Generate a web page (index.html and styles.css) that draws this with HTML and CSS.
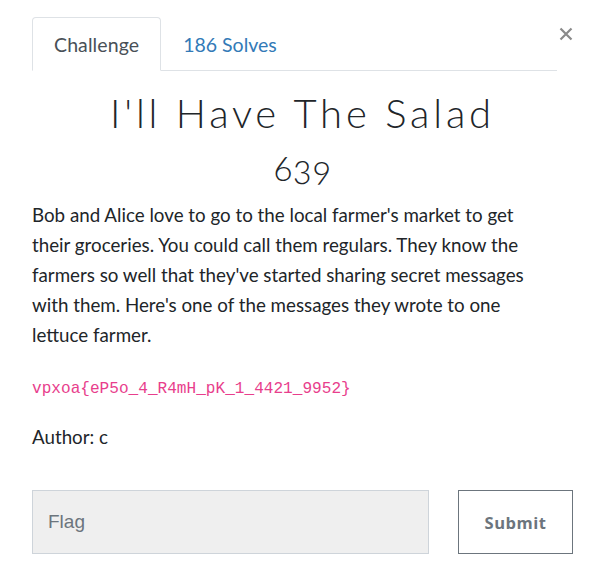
FILE: index.html
```html
<!DOCTYPE html>
<html>
<head>
<meta charset="utf-8">
<link rel="stylesheet" href="styles.css">
</head>
<body>
<div class="modal">
  <button class="close" aria-label="Close">
    <svg width="14" height="14" viewBox="0 0 14 14"><path d="M1.5 1.5 L12.5 12.5 M12.5 1.5 L1.5 12.5" stroke="#8a8a8a" stroke-width="2.2" stroke-linecap="butt"/></svg>
  </button>
  <ul class="tabs">
    <li class="tab active">Challenge</li>
    <li class="tab link">186 Solves</li>
  </ul>
  <h2 class="title">I'll Have The Salad</h2>
  <h3 class="points">639</h3>
  <p class="desc">Bob and Alice love to go to the local farmer's market to get their groceries. You could call them regulars. They know the farmers so well that they've started sharing secret messages with them. Here's one of the messages they wrote to one lettuce farmer.</p>
  <p class="code"><code>vpxoa{eP5o_4_R4mH_pK_1_4421_9952}</code></p>
  <p class="author">Author: c</p>
  <form class="submit-row">
    <input class="flag" type="text" placeholder="Flag">
    <button class="submit" type="button">Submit</button>
  </form>
</div>
</body>
</html>
```
FILE: styles.css
```css
html, body {
  margin: 0;
  padding: 0;
  background: #fff;
}
body {
  font-family: Lato, "Noto Sans", sans-serif;
  color: #212529;
}
.modal {
  position: relative;
  width: 541px;
  padding: 17px 0 0 32px;
}
.close {
  position: absolute;
  top: 27px;
  right: 0;
  width: 14px;
  height: 14px;
  padding: 0;
  border: 0;
  background: none;
  display: block;
}
.close svg { display: block; }
.tabs {
  list-style: none;
  margin: 0;
  padding: 0;
  width: 525px;
  display: flex;
  border-bottom: 1px solid #dee2e6;
}
.tab {
  font-size: 19.5px;
  line-height: 27px;
  padding: 13px 21px 12px 21px;
  border: 1px solid transparent;
  border-top-left-radius: 4px;
  border-top-right-radius: 4px;
  margin-bottom: -1px;
}
.tab.active {
  color: #495057;
  border-color: #dee2e6 #dee2e6 #fff;
  background: #fff;
  letter-spacing: 0.1px;
}
.tab.link {
  color: #337ab7;
  padding-left: 21px;
}
.title {
  font-family: Lato, sans-serif;
  font-weight: 300;
  font-size: 40px;
  line-height: 48px;
  letter-spacing: 3.8px;
  text-align: center;
  margin: 18px 0 0;
  color: #212529;
}
.points {
  font-weight: 300;
  font-size: 35px;
  line-height: 40px;
  font-feature-settings: "onum" 1;
  font-variant-numeric: oldstyle-nums;
  letter-spacing: 0.5px;
  text-align: center;
  margin: 10px 0 0;
  color: #212529;
}
.desc {
  max-width: 512px;
  font-size: 18.75px;
  line-height: 30px;
  margin: 13px 0 0;
  color: #212529;
}
.code {
  margin: 25px 0 0;
  line-height: 24px;
}
.code code {
  font-family: "Liberation Mono", monospace;
  font-size: 16.1px;
  color: #e83e8c;
}
.author {
  font-size: 18.75px;
  line-height: 30px;
  margin: 21px 0 0;
}
.submit-row {
  display: flex;
  justify-content: space-between;
  margin-top: 38px;
}
.flag {
  box-sizing: border-box;
  width: 397px;
  height: 64px;
  background: #efefef;
  border: 1px solid #ced4da;
  padding: 0 15px;
  font-family: "Liberation Sans", Arial, sans-serif;
  font-size: 19px;
  color: #495057;
  outline: none;
}
.flag::placeholder {
  color: #6c757d;
}
.submit {
  box-sizing: border-box;
  width: 115px;
  height: 64px;
  background: #fff;
  border: 1px solid #6c757d;
  color: #6c757d;
  font-family: "Open Sans", sans-serif;
  font-weight: 700;
  font-size: 16.5px;
  letter-spacing: 0.5px;
  border-radius: 0;
  padding: 0;
}
```
